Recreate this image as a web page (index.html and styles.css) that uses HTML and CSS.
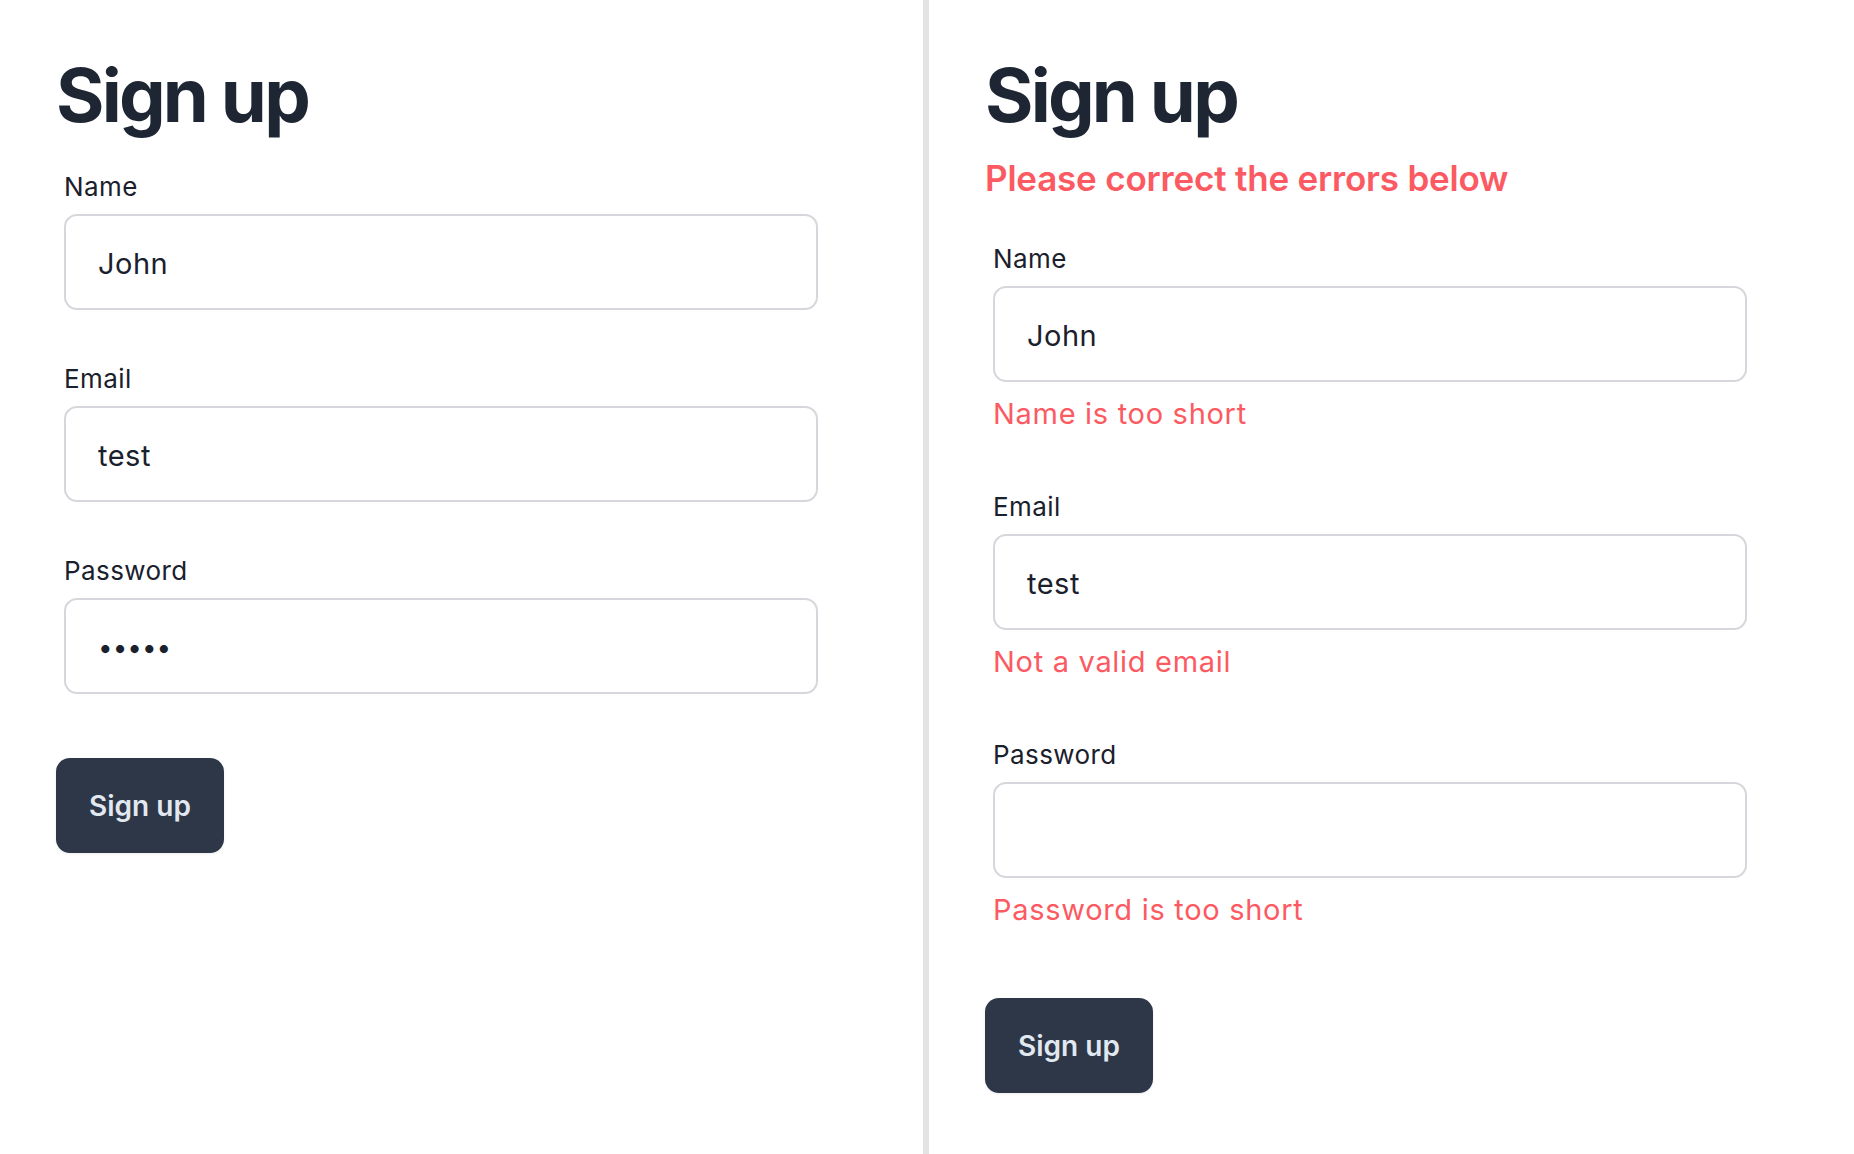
FILE: index.html
```html
<!DOCTYPE html>
<html lang="en">
<head>
<meta charset="utf-8">
<title>Sign up</title>
<link rel="stylesheet" href="styles.css">
</head>
<body>
<div class="page">
  <section class="panel">
    <h1 class="title">Sign up</h1>
    <form class="form">
      <div class="field">
        <label class="label">Name</label>
        <input class="input" type="text" value="John">
      </div>
      <div class="field">
        <label class="label">Email</label>
        <input class="input" type="text" value="test">
      </div>
      <div class="field">
        <label class="label">Password</label>
        <input class="input input-password" type="password" value="12345">
      </div>
      <button class="btn" type="button">Sign up</button>
    </form>
  </section>
  <div class="divider"></div>
  <section class="panel">
    <h1 class="title">Sign up</h1>
    <p class="form-error">Please correct the errors below</p>
    <form class="form form-errored">
      <div class="field">
        <label class="label">Name</label>
        <input class="input" type="text" value="John">
        <p class="error">Name is too short</p>
      </div>
      <div class="field">
        <label class="label">Email</label>
        <input class="input" type="text" value="test">
        <p class="error">Not a valid email</p>
      </div>
      <div class="field">
        <label class="label">Password</label>
        <input class="input input-password" type="password" value="">
        <p class="error">Password is too short</p>
      </div>
      <button class="btn" type="button">Sign up</button>
    </form>
  </section>
</div>
</body>
</html>
```

FILE: styles.css
```css
* { box-sizing: border-box; }

html, body {
  margin: 0;
  padding: 0;
  background: #ffffff;
}

body {
  font-family: Inter, "Noto Sans", "Liberation Sans", sans-serif;
  color: #1a202c;
}

.page {
  display: flex;
  min-height: 100vh;
}

.panel {
  padding: 51px 56px 0 56px;
}

.panel:first-child {
  flex: 0 0 923px;
}

.panel:last-child {
  flex: 1 1 auto;
}

.divider {
  flex: 0 0 6px;
  background: #e3e3e3;
}

.title {
  margin: 0;
  font-size: 74px;
  line-height: 88px;
  font-weight: 700;
  color: #1e2533;
  letter-spacing: -2.8px;
}

.form-error {
  margin: 18px 0 0 0;
  font-size: 35px;
  line-height: 42px;
  font-weight: 600;
  color: #fc5a62;
  letter-spacing: -0.2px;
}

.form {
  display: flex;
  flex-direction: column;
  align-items: flex-start;
  margin-top: 33px;
}

.form-errored {
  margin-top: 45px;
}

.field {
  display: flex;
  flex-direction: column;
  margin: 0 0 54px 8px;
  width: 754px;
}

.label {
  display: block;
  font-size: 26px;
  line-height: 30px;
  letter-spacing: 0.4px;
  color: #1a202c;
  margin-bottom: 12px;
}

.input {
  display: block;
  width: 754px;
  height: 96px;
  border: 2px solid #d6d6dc;
  border-radius: 13px;
  padding: 2px 32px 0 32px;
  font-family: Inter, "Noto Sans", "Liberation Sans", sans-serif;
  font-size: 29px;
  letter-spacing: 0.5px;
  color: #1a202c;
  background: #ffffff;
  outline: none;
}

.input-password {
  font-size: 26px;
  letter-spacing: 0;
}

.error {
  margin: 12px 0 4px 0;
  font-size: 29px;
  line-height: 40px;
  letter-spacing: 0.7px;
  color: #fc5a62;
}

.btn {
  margin-top: 10px;
  height: 95px;
  padding: 0 33px;
  border: none;
  border-radius: 14px;
  background: #2d3748;
  color: #e2e8f0;
  font-family: Inter, "Noto Sans", "Liberation Sans", sans-serif;
  font-size: 28px;
  font-weight: 600;
  box-shadow: 0 1px 3px rgba(0, 0, 0, 0.08);
}
```
